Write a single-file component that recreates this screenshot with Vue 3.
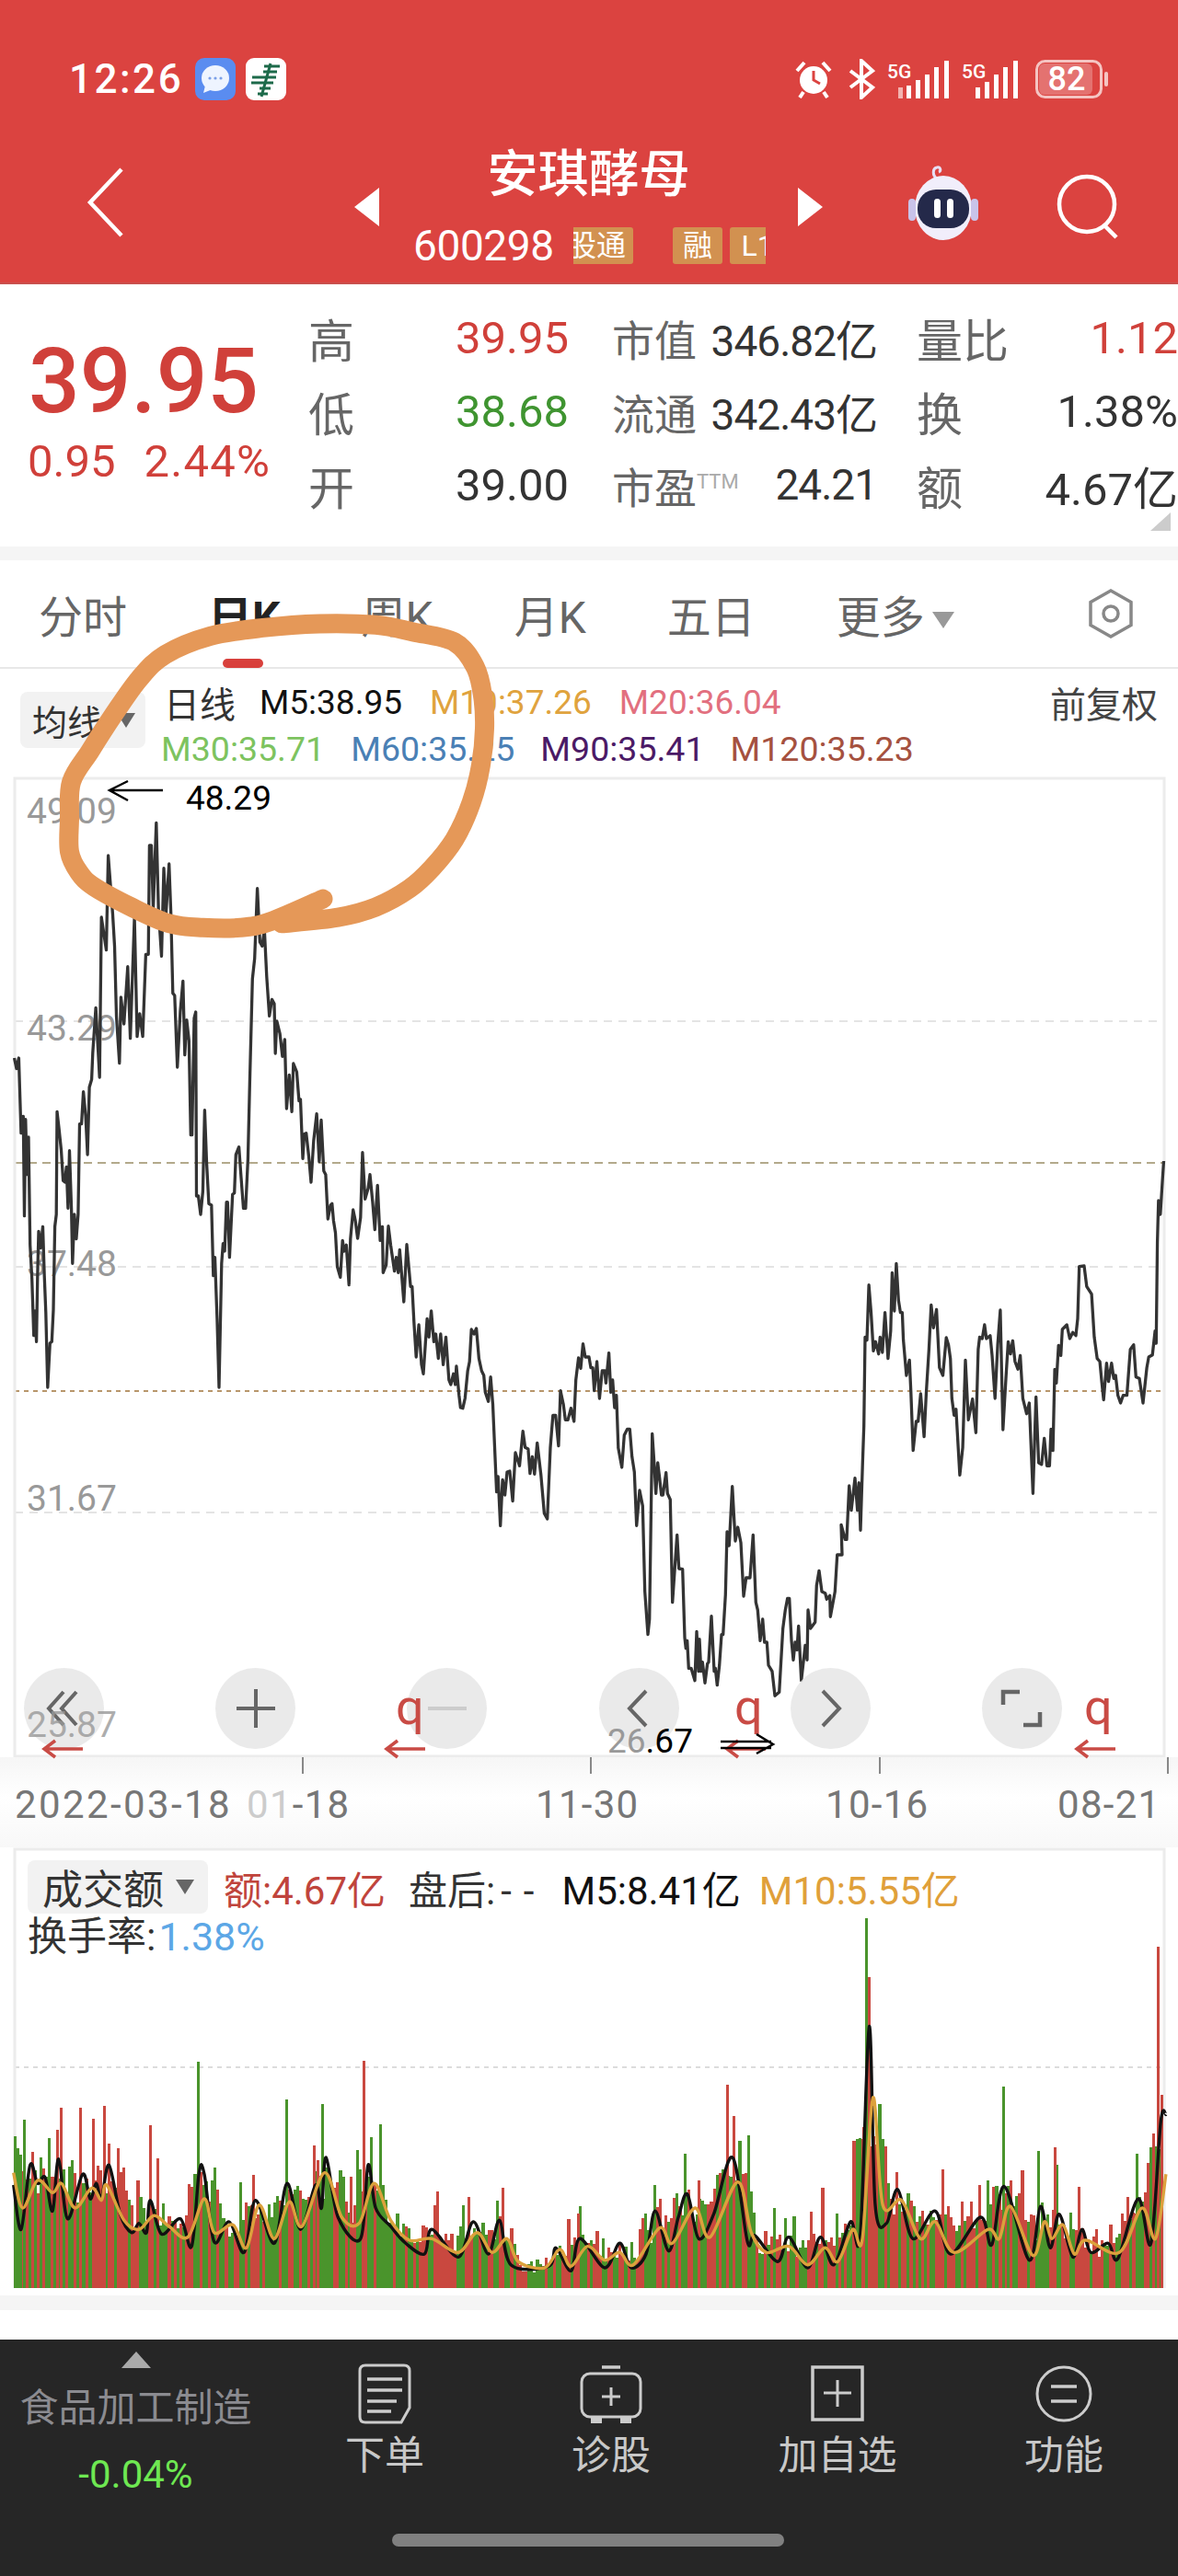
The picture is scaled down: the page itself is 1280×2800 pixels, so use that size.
<script setup>
// price line traced in segments, each one is flat x,y pairs in its own scale
const mapPts = (list, ox, oy, sx, sy) => {
  const out = [];
  for (let i = 0; i < list.length; i += 2) {
    out.push([ox + list[i] / sx, oy + list[i + 1] / sy]);
  }
  return out;
};

const seg1 = [38,150,44,185,50,150,56,395,62,340,65,665,68,350,72,530,76,408,80,760,85,870,90,1055,93,975,97,1075,100,860,103,715,108,770,114,700,118,860,122,980,127,1224,133,1080,138,1075,142,970,146,700,150,660,152,325,157,380,163,450,168,550,173,555,177,505,181,640,185,452,190,640,193,820,198,660,203,740,208,660,212,365,217,365,222,260,228,340,233,465,238,245,244,220,247,133,255,-14,265,213,270,-309,283,-202,288,-510,294,-416,300,-322,305,-215,310,13,318,167,322,-48,330,39,340,-148,347,86,358,-309,365,80,372,6,380,80,388,-188,395,-188,398,-543,403,-543,408,-336,416,-617,422,-336,430,-182,436,-469,442,-322,450,-483,455,-322,460,-61,465,-54,472,180,480,-1,487,-101,492,140,497,26,503,93,508,401,511,401,517,20,521,0,523,600,528,600,534,660,540,585,545,320,550,490,556,625,563,630,568,860,572,800,578,1000,583,1224,590,820,594,755,598,780,603,620,606,620,611,800,619,595,624,590,628,465,636,440,642,540,648,640,654,640,660,480,665,227,672,-108,678,-175,685,-403,692,-228,698,-215,704,-269,710,-115,717,13,724,-41,730,-27,733,135,737,30,745,70,752,145,758,90,763,315,770,205,777,325,781,168,790,195,796,290,800,285,806,478,810,398,815,395,822,470,828,555,835,420,843,332,850,488,855,352,862,518,867,530,873,675,880,630,884,625,888,680,893,720,898,830,906,865,912,745,916,780,922,760,929,890,933,740,940,645,946,680,952,738,960,670,965,458,972,610,980,575,985,530,992,620,998,710,1005,565,1012,745,1018,700,1020,850,1028,825,1034,698,1040,760,1050,845,1055,800,1060,850,1064,775,1075,945,1083,758,1093,895,1097,895,1102,1010,1108,1125,1115,1020,1122,1150,1127,1180,1137,1000,1142,1060,1148,975,1155,1075,1160,1050,1167,1130,1173,1050,1180,1150,1187,1060,1195,1200,1200,1215,1207,1180,1212,1215,1215,1155,1222,1250,1226,1290,1232,1292,1238,1260,1245,1170,1250,1140,1255,1035,1262,1050,1268,1032,1275,1130,1282,1170,1288,1185,1292,1240,1300,1270,1306,1190,1312,1280,1322,1565,1326,1515,1332,1675,1338,1525,1344,1575,1350,1500,1357,1497,1365,1595,1372,1437,1383,1480,1392,1367,1398,1420,1406,1425,1411,1505,1417,1450,1423,1507,1430,1405,1440,1510,1449,1635,1457,1653,1465,1420,1472,1315,1479,1315,1487,1415,1492,1235,1500,1280,1505,1330,1512,1330,1520,1292,1528,1335,1533,1200,1540,1128,1546,1162,1552,1082,1558,1125,1568,1125];
const seg2 = [5,560,10,560,14,635,21,540,28,660,35,570,42,570,45,610,53,512,58,640,63,600,68,690,73,650,78,820];
const seg3 = [95,70,107,135,115,30,125,10,133,10,140,100,148,150,155,325,165,210,175,260,182,540,192,680,197,630,206,25,213,130,218,220,224,120,230,170,236,225,241,225,251,152,256,220,265,240,272,575,287,355,293,465,305,467,312,690,316,725,320,700,325,790,333,790,345,830,351,670,357,800,360,695,365,800,370,770,378,838,386,775,390,770,399,620,408,800,412,790,418,845,425,780,432,680,437,680,445,550,450,345,457,390,467,197,477,375,485,330,495,380,504,555,512,495,525,495,535,355,544,575,550,600,558,700,566,630,572,705,580,705,585,780,597,800,606,880,620,868,632,660,640,600,647,562,653,562,660,700,666,763,672,705,678,730,683,652,692,830,705,715,711,763,714,600,722,660,737,640,742,520,750,472,759,540,770,545,775,565,785,553,787,622,802,540,809,420,825,420,822,322,835,370,840,370,848,195,855,275,867,170,875,275,880,185,885,340,892,120,896,0];
const seg4 = [735,460,740,470,745,290,751,380,757,505,763,475,771,515,775,460,781,510,788,380,796,530,803,440,807,250,813,375,818,220,824,340,829,380,834,380,837,470,845,585,853,535,857,640,863,830,871,735,876,735,883,645,892,785,898,640,905,500,911,355,917,430,925,370,933,560,942,585,951,462,957,485,962,530,966,660,972,715,977,695,987,910,995,820,1002,535,1010,730,1021,662,1030,772,1036,500,1040,460,1047,465,1053,420,1058,465,1068,455,1073,520,1081,660,1088,485,1095,372,1102,762,1110,590,1116,475,1122,515,1128,472,1134,540,1142,565,1148,520,1155,660,1165,710,1172,675,1182,970,1190,655,1197,870,1205,875,1212,790,1219,880,1226,880,1230,760,1235,830,1240,565,1244,610,1250,487,1256,520,1260,435,1272,420,1280,465,1288,445,1296,455,1301,400,1305,230,1318,228,1325,295,1338,320,1345,460,1353,530,1360,540,1365,605,1370,665,1378,545,1383,605,1391,545,1397,595,1402,585,1408,650,1415,675,1422,650,1432,650,1441,500,1450,485,1456,590,1465,595,1475,675,1485,560,1490,525,1500,518,1507,440,1510,480,1513,150,1516,15,1521,60,1527,-60,1530,-114];

const pricePts = [
  ...mapPts(seg1, 0, 1100, 2.45, 3),
  ...mapPts(seg2, 640, 1300, 2.45, 3),
  ...mapPts(seg3, 640, 1550, 3, 3),
  ...mapPts(seg4, 640, 1300, 2.45, 3),
];
const priceLine = pricePts.map((p, i) => (i ? 'L' : 'M') + p[0].toFixed(1) + ' ' + p[1].toFixed(1)).join(' ');

// volume panel
const ma5 = mapPts([18,885,28,1030,40,820,50,880,60,860,70,970,78,800,90,995,110,850,120,930,128,880,135,930,145,820,160,980,175,1040,185,1010,195,1040,200,935,215,1045,240,995,255,1085,265,845,272,850,285,1070,305,1005,325,1105,340,935,365,1075,382,880,400,1030,420,885,428,960,434,795,450,990,480,1060,490,820,500,960,520,1020,540,1075,565,1110,575,1030,610,1120,630,1005,650,1110,665,1000,680,1145,730,1150,740,1090,760,1165,772,1060,805,1155,825,1075,840,1155,860,1110,872,970,890,1100,903,990,915,915,930,1060,950,980,975,795,995,1070,1005,1050,1035,1135,1050,1055,1075,1155,1092,1055,1110,1145,1132,1005,1145,1050,1157,368,1165,950,1180,1010,1195,900,1215,1060,1245,970,1265,1110,1305,990,1320,1080,1337,890,1370,1130,1385,955,1398,1090,1410,980,1428,1120,1440,1030,1452,1105,1475,1075,1488,1125,1515,930,1532,1075,1545,680,1552,655], 0, 2080, 1.225, 3);
const ma10 = mapPts([18,845,30,960,50,870,70,910,82,880,100,960,122,895,135,935,142,885,165,1000,185,1030,205,985,225,1020,250,1055,272,930,285,1040,310,1015,328,1090,345,950,365,1060,385,940,402,1020,432,845,455,990,478,1010,498,880,520,1000,545,1065,575,1060,610,1105,635,1040,655,1105,675,1060,690,1135,725,1155,745,1095,760,1150,782,1085,805,1130,825,1105,843,1145,878,1025,895,1075,925,960,945,1055,982,875,1000,1040,1020,1105,1050,1085,1075,1145,1098,1090,1115,1135,1135,1030,1148,1060,1162,600,1175,950,1200,935,1225,1060,1245,1005,1270,1105,1315,1030,1330,1060,1345,955,1375,1115,1390,1005,1400,1060,1415,1015,1430,1110,1445,1065,1490,1105,1520,960,1538,1060,1552,850], 0, 2080, 1.225, 3);

// catmull-rom through the traced points, so the peaks keep their height
const smooth = (pts) => {
  let d = `M${pts[0][0].toFixed(1)} ${pts[0][1].toFixed(1)}`;
  for (let i = 0; i < pts.length - 1; i++) {
    const p0 = pts[i - 1] || pts[i];
    const p1 = pts[i];
    const p2 = pts[i + 1];
    const p3 = pts[i + 2] || p2;
    const c1x = p1[0] + (p2[0] - p0[0]) / 6;
    const c1y = p1[1] + (p2[1] - p0[1]) / 6;
    const c2x = p2[0] - (p3[0] - p1[0]) / 6;
    const c2y = p2[1] - (p3[1] - p1[1]) / 6;
    d += ` C${c1x.toFixed(1)} ${c1y.toFixed(1)} ${c2x.toFixed(1)} ${c2y.toFixed(1)} ${p2[0].toFixed(1)} ${p2[1].toFixed(1)}`;
  }
  return d;
};
const ma5Line = smooth(ma5);
const ma10Line = smooth(ma10);

const levelAt = (x) => {
  for (let i = 1; i < ma5.length; i++) {
    if (x <= ma5[i][0]) {
      const a = ma5[i - 1];
      const b = ma5[i];
      return a[1] + ((b[1] - a[1]) * (x - a[0])) / (b[0] - a[0] || 1);
    }
  }
  return ma5[ma5.length - 1][1];
};

const RED = '#c9483f';
const GREEN = '#4a942c';
const BOTTOM = 2487;
let seed = 298;
const rnd = () => {
  seed = (seed * 16807) % 2147483647;
  return seed / 2147483647;
};

// the bars fill the dips of the average too, so take the highest level close by
const bars = [];
for (let x = 15; x < 1264; x += 3.1) {
  const near = Math.min(levelAt(x - 12), levelAt(x), levelAt(x + 12));
  const level = Math.max(near, 2325);
  const jump = rnd() > 0.85 ? rnd() * 60 : 0;
  bars.push({ x: x.toFixed(1), y: (level + rnd() * 24 - 8 - jump).toFixed(1), color: rnd() > 0.5 ? RED : GREEN });
}

const spikes = [
  [30,672,GREEN],[262,483,GREEN],[380,606,GREEN],[428,621,GREEN],[492,730,GREEN],[910,783,GREEN],[1152,15,GREEN],[1334,565,GREEN],[1380,775,GREEN],[1512,783,GREEN],[870,885,GREEN],
  [105,632,RED],[123,670,RED],[137,628,RED],[143,750,RED],[75,705,RED],[198,690,RED],[335,852,RED],[416,757,RED],[482,480,RED],[466,858,RED],[622,925,RED],[768,978,RED],[967,558,RED],[1155,207,RED],[1148,695,RED],[1302,885,RED],[1402,763,RED],[1435,892,RED],[1540,108,RED],[1192,843,RED],[928,870,RED],
].map((s) => ({ x: (s[0] / 1.225).toFixed(1), y: (2080 + s[1] / 3).toFixed(1), color: s[2] }));

const yLabels = [
  { text: '49.09', y: 895 },
  { text: '43.29', y: 1131 },
  { text: '37.48', y: 1387 },
  { text: '31.67', y: 1642 },
];

const tabs = ['分时', '日K', '周K', '月K', '五日'];
const rows = [
  { label: '高', val: '39.95', cls: 'up', l2: '市值', v2: '346.82亿', l3: '量比', v3: '1.12', c3: 'up' },
  { label: '低', val: '38.68', cls: 'down', l2: '流通', v2: '342.43亿', l3: '换', v3: '1.38%', c3: '' },
  { label: '开', val: '39.00', cls: '', l2: '市盈', v2: '24.21', ttm: true, l3: '额', v3: '4.67亿', c3: '' },
];

// the hand-drawn ring over the legend, traced from the photo
const ringPts = mapPts([860,755,720,810,640,825,540,825,450,815,350,775,250,725,210,690,185,640,185,560,190,470,240,395,300,310,370,220,440,160,560,115,700,95,850,85,1000,88,1100,105,1210,130,1265,190,1285,260,1290,340,1280,430,1255,520,1210,610,1150,680,1090,730,1000,775,900,800,750,815], 0, 640, 2.45, 2.24);
const ring = smooth(ringPts);
const redQs = [
  { x: 442, arrow: 420 },
  { x: 810, arrow: 790 },
  { x: 1190, arrow: 1170 },
];
</script>

<template>
  <div class="page">
    <header class="head">
      <div class="status">
        <span class="time">12:26</span>
        <svg class="app-icon" width="44" height="46" viewBox="0 0 44 46">
          <rect width="44" height="46" rx="10" fill="#5a8cf0" />
          <ellipse cx="22" cy="22" rx="15" ry="14" fill="#eef4ff" />
          <path d="M11 30 L9 38 L19 34 Z" fill="#eef4ff" />
          <circle cx="16" cy="22" r="1.6" fill="#7a9fe8" />
          <circle cx="22" cy="22" r="1.6" fill="#7a9fe8" />
          <circle cx="28" cy="22" r="1.6" fill="#7a9fe8" />
        </svg>
        <svg class="app-icon" width="44" height="46" viewBox="0 0 44 46">
          <rect width="44" height="46" rx="9" fill="#fff" />
          <path d="M20 9 H37 M19 15 H34 M7 21 H33 M6 27 H30 M15 33 H27 M13 39 H24" fill="none" stroke="#1d6a4a" stroke-width="3.2" />
          <path d="M27 6 L17 42" fill="none" stroke="#1d6a4a" stroke-width="3" />
        </svg>
        <div class="status-right">
          <svg class="alarm" width="40" height="42" viewBox="0 0 40 42">
            <circle cx="20" cy="22" r="15" fill="#fff" />
            <path d="M20 12 V22 L27 26" fill="none" stroke="#db4340" stroke-width="3" />
            <path d="M2 12 L10 3 M38 12 L30 3 M9 35 L5 41 M31 35 L35 41" stroke="#fff" stroke-width="4" fill="none" />
          </svg>
          <svg width="30" height="44" viewBox="0 0 30 44">
            <path d="M3 13 L27 31 L15 42 V2 L27 13 L3 31" fill="none" stroke="#fff" stroke-width="4" />
          </svg>
          <svg width="68" height="42" viewBox="0 0 68 42">
            <text x="0" y="20" class="five-g">5G</text>
            <rect x="12" y="30" width="5" height="12" fill="#f3b3b0" />
            <rect x="21" y="28" width="5" height="14" fill="#fff" />
            <rect x="31" y="22" width="5" height="20" fill="#fff" />
            <rect x="41" y="16" width="5" height="26" fill="#fff" />
            <rect x="51" y="8" width="5" height="34" fill="#fff" />
            <rect x="62" y="1" width="5" height="41" fill="#fff" />
          </svg>
          <svg width="63" height="42" viewBox="0 0 63 42">
            <text x="0" y="20" class="five-g">5G</text>
            <rect x="15" y="30" width="5" height="12" fill="#fff" />
            <rect x="25" y="24" width="5" height="18" fill="#fff" />
            <rect x="35" y="16" width="5" height="26" fill="#fff" />
            <rect x="45" y="8" width="5" height="34" fill="#fff" />
            <rect x="56" y="1" width="5" height="41" fill="#fff" />
          </svg>
          <svg class="battery" width="80" height="42" viewBox="0 0 80 42">
            <rect x="1.5" y="1.5" width="70" height="39" rx="9" fill="none" stroke="#f5c4c2" stroke-width="3" />
            <rect x="4" y="4" width="58" height="34" rx="6" fill="#fff" opacity="0.25" />
            <rect x="75" y="13" width="4" height="16" rx="2" fill="#f5c4c2" />
            <text x="34" y="33" text-anchor="middle" class="batt">82</text>
          </svg>
        </div>
      </div>
      <div class="nav">
        <div class="nav-left">
          <svg width="42" height="76" viewBox="0 0 42 76">
            <path d="M38 2 L4 38 L38 74" fill="none" stroke="#fff" stroke-width="4.5" />
          </svg>
        </div>
        <div class="nav-mid">
          <svg class="tri" width="27" height="42" viewBox="0 0 27 42"><path d="M27 0 V42 L0 21 Z" fill="#fff" /></svg>
          <div class="nav-name">
            <div class="title">安琪酵母</div>
            <div class="sub">
              <span class="code">600298</span>
              <span class="tag tag-clip"><span>沪股通</span></span>
              <span class="tag tag-rz">融</span>
              <span class="tag tag-l1">L1</span>
            </div>
          </div>
          <svg class="tri" width="27" height="42" viewBox="0 0 27 42"><path d="M0 0 V42 L27 21 Z" fill="#fff" /></svg>
        </div>
        <div class="nav-right">
          <svg width="86" height="82" viewBox="0 0 86 82">
            <path d="M36 14 C31 11 31 3 36 2 C40 1 41 6 38 7" fill="none" stroke="#e7dff4" stroke-width="3" />
            <ellipse cx="43" cy="46" rx="31" ry="35" fill="#f1eefb" />
            <rect x="5" y="36" width="8" height="24" rx="4" fill="#c9c3ea" />
            <rect x="73" y="36" width="8" height="24" rx="4" fill="#c9c3ea" />
            <rect x="15" y="26" width="56" height="42" rx="20" fill="#24294a" />
            <rect x="33" y="36" width="7" height="21" rx="3.5" fill="#fff" />
            <rect x="47" y="36" width="7" height="21" rx="3.5" fill="#fff" />
          </svg>
          <svg class="search" width="72" height="72" viewBox="0 0 72 72">
            <circle cx="33" cy="34" r="30" fill="none" stroke="#fff" stroke-width="4.5" />
            <path d="M52 57 L65 70" stroke="#fff" stroke-width="4.5" />
          </svg>
        </div>
      </div>
    </header>

    <section class="quote">
      <div class="price-box">
        <div class="price">39.95</div>
        <div class="change"><span>0.95</span><span>2.44%</span></div>
      </div>
      <div class="quote-grid">
        <template v-for="r in rows" :key="r.label">
          <span class="q-label">{{ r.label }}</span>
          <span class="q-val" :class="r.cls">{{ r.val }}</span>
          <span class="q-label2">{{ r.l2 }}<sup v-if="r.ttm">TTM</sup></span>
          <span class="q-val2">{{ r.v2 }}</span>
          <span class="q-label">{{ r.l3 }}</span>
          <span class="q-val q-end" :class="r.c3">{{ r.v3 }}</span>
        </template>
      </div>
      <span class="corner"></span>
    </section>

    <div class="gap-bar"></div>

    <nav class="tabs">
      <span v-for="t in tabs" :key="t" class="tab" :class="{ active: t === '日K' }">{{ t }}</span>
      <span class="tab">更多<i class="caret"></i></span>
      <svg class="hex" width="56" height="56" viewBox="0 0 56 56">
        <path d="M28 3 L50 15.5 V40.5 L28 53 L6 40.5 V15.5 Z" fill="none" stroke="#888" stroke-width="3.5" />
        <circle cx="28" cy="28" r="8" fill="none" stroke="#888" stroke-width="3.5" />
      </svg>
    </nav>

    <div class="legend-bar">
      <div class="pill pill-ma">均线<i class="caret dark"></i></div>
      <div class="legend">
        <div class="legend-row">
          <span class="l-name">日线</span>
          <span class="c-black">M5:38.95</span>
          <span class="c-orange">M10:37.26</span>
          <span class="c-pink">M20:36.04</span>
          <span class="l-right">前复权</span>
        </div>
        <div class="legend-row second">
          <span class="c-green">M30:35.71</span>
          <span class="c-blue">M60:35.25</span>
          <span class="c-purple">M90:35.41</span>
          <span class="c-brown">M120:35.23</span>
        </div>
      </div>
    </div>

    <div class="chart">
      <svg class="chart-svg" width="1280" height="1066" viewBox="0 844 1280 1066">
        <path d="M16 1110 H1264 M16 1377 H1264 M16 1644 H1264" stroke="#e4e4e4" stroke-width="2" stroke-dasharray="9 7" />
        <path d="M16 1264 H1264" stroke="#b3a98b" stroke-width="2" stroke-dasharray="9 6" />
        <path d="M16 1512 H1264" stroke="#b8966b" stroke-width="2" stroke-dasharray="5 5" />
        <path d="M16 846 H1265 V1909 H16 Z" fill="none" stroke="#ececec" stroke-width="3" />
        <text v-for="l in yLabels" :key="l.text" x="29" :y="l.y" class="y-label">{{ l.text }}</text>
        <path :d="priceLine" fill="none" stroke="#333" stroke-width="3.3" stroke-linejoin="round" />
      </svg>
      <div class="chart-btns">
        <span class="round">
          <svg width="46" height="46" viewBox="0 0 46 46"><path d="M22 5 L6 23 L22 41 M36 5 L20 23 L36 41" fill="none" stroke="#666" stroke-width="4" /></svg>
        </span>
        <span class="round">
          <svg width="46" height="46" viewBox="0 0 46 46"><path d="M23 2 V44 M2 23 H44" fill="none" stroke="#666" stroke-width="4" /></svg>
        </span>
        <span class="round">
          <svg width="46" height="46" viewBox="0 0 46 46"><path d="M2 23 H44" fill="none" stroke="#ccc" stroke-width="4" /></svg>
        </span>
        <span class="round">
          <svg width="46" height="46" viewBox="0 0 46 46"><path d="M31 4 L13 23 L31 42" fill="none" stroke="#666" stroke-width="4" /></svg>
        </span>
        <span class="round">
          <svg width="46" height="46" viewBox="0 0 46 46"><path d="M15 4 L33 23 L15 42" fill="none" stroke="#666" stroke-width="4" /></svg>
        </span>
        <span class="round">
          <svg width="46" height="46" viewBox="0 0 46 46"><path d="M3 19 V5 H21 M43 27 V41 H25" fill="none" stroke="#666" stroke-width="4.5" /></svg>
        </span>
      </div>
      <!-- lies over the round button in the reference -->
      <span class="low-label">25.87</span>
    </div>

    <div class="axis">
      <div class="ticks"><i></i><i></i><i></i><i></i></div>
      <div class="dates">
        <span class="first-date">2022-03-18</span>
        <span><em>01</em>-18</span>
        <span>11-30</span>
        <span>10-16</span>
        <span>08-21</span>
      </div>
    </div>

    <section class="vol">
      <svg class="vol-svg" width="1280" height="479" viewBox="0 2008 1280 479">
        <path d="M16 2247 H1265" stroke="#dcdcdc" stroke-width="2" stroke-dasharray="5 5" />
        <path d="M16 2487 V2010 H1265 V2487" fill="none" stroke="#ececec" stroke-width="3" />
        <g shape-rendering="crispEdges">
          <rect v-for="b in bars" :key="b.x" :x="b.x" :y="b.y" width="3.2" :height="BOTTOM - b.y" :fill="b.color" />
          <rect v-for="s in spikes" :key="s.x" :x="s.x" :y="s.y" width="3" :height="BOTTOM - s.y" :fill="s.color" />
        </g>
        <path :d="ma5Line" fill="none" stroke="#111" stroke-width="3.4" stroke-linejoin="round" />
        <path :d="ma10Line" fill="none" stroke="#dca13c" stroke-width="3.4" stroke-linejoin="round" />
      </svg>
      <div class="vol-head">
        <div class="pill pill-vol">成交额<i class="caret dark"></i></div>
        <span class="vol-red">额:4.67亿</span>
        <span class="vol-dark">盘后:<em>--</em></span>
        <span class="vol-black">M5:8.41亿</span>
        <span class="vol-orange">M10:5.55亿</span>
      </div>
      <div class="turnover">换手率:<span>1.38%</span></div>
    </section>

    <div class="gap-bar low"></div>

    <footer class="foot">
      <div class="foot-main">
        <div class="sector">
          <i class="sector-up"></i>
          <div class="sector-name">食品加工制造</div>
          <div class="sector-pct">-0.04%</div>
        </div>
        <div class="foot-item">
          <svg width="58" height="66" viewBox="0 0 58 66">
            <path d="M8 2 H50 Q56 2 56 8 V48 L47 64 H8 Q2 64 2 58 V8 Q2 2 8 2 Z" fill="none" stroke="#ccc" stroke-width="3" />
            <path d="M10 17 H48 M10 29 H48 M10 41 H42 M10 52 H36" stroke="#ccc" stroke-width="3.5" />
          </svg>
          <span>下单</span>
        </div>
        <div class="foot-item">
          <svg width="68" height="66" viewBox="0 0 68 66">
            <path d="M24 4 H44" stroke="#ccc" stroke-width="3.5" />
            <rect x="2" y="11" width="64" height="47" rx="9" fill="none" stroke="#ccc" stroke-width="3" />
            <path d="M34 26 V46 M24 36 H44" stroke="#ccc" stroke-width="3" />
            <path d="M12 58 H24 V65 H12 Z M44 58 H56 V65 H44 Z" fill="#ccc" />
          </svg>
          <span>诊股</span>
        </div>
        <div class="foot-item">
          <svg width="58" height="66" viewBox="0 0 58 66">
            <rect x="2" y="4" width="54" height="57" fill="none" stroke="#ccc" stroke-width="3.5" />
            <path d="M29 18 V47 M14 32 H44" stroke="#ccc" stroke-width="3" />
          </svg>
          <span>加自选</span>
        </div>
        <div class="foot-item">
          <svg width="62" height="66" viewBox="0 0 62 66">
            <circle cx="31" cy="33" r="29" fill="none" stroke="#ccc" stroke-width="3" />
            <path d="M17 25 H45 M17 41 H45" stroke="#ccc" stroke-width="3.5" />
          </svg>
          <span>功能</span>
        </div>
      </div>
      <div class="home-bar"></div>
    </footer>

    <!-- the photo's scribbles sit over everything else -->
    <svg class="scribble" width="1280" height="2800" viewBox="0 0 1280 2800">
      <path :d="ring" fill="none" stroke="#e59858" stroke-width="21" stroke-linecap="round" stroke-linejoin="round" />
      <path d="M177 859 H119 M139 849 L119 859 L139 870" fill="none" stroke="#000" stroke-width="2.5" />
      <text x="202" y="880" class="note">48.29</text>
      <text x="660" y="1905" class="note"><tspan fill="#999">26</tspan>.67</text>
      <path d="M90 1901 H50 M60 1892 L48 1901 L60 1910" fill="none" stroke="#c94b45" stroke-width="3.5" />
      <g v-for="q in redQs" :key="q.x">
        <text :x="q.x - 12" y="1874" class="red-q">q</text>
        <path :d="`M${q.arrow + 42} 1901 H${q.arrow + 2} M${q.arrow + 12} 1892 L${q.arrow} 1901 L${q.arrow + 12} 1910`" fill="none" stroke="#c94b45" stroke-width="3.5" />
      </g>
      <path d="M783 1893 H838 M783 1900 H838 M822 1885 L840 1896 L822 1906" fill="none" stroke="#000" stroke-width="2.5" />
    </svg>
  </div>
</template>

<style scoped>
.page {
  position: relative;
  width: 1280px;
  height: 2800px;
  overflow: hidden;
  background: #fff;
  font-family: Roboto, "Noto Sans CJK SC", sans-serif;
  color: #333;
}

.head {
  height: 309px;
  background: #db4340;
  color: #fff;
  box-sizing: border-box;
  border-bottom: 2px solid #c9504d;
}

.status {
  display: flex;
  align-items: center;
  height: 160px;
  padding: 12px 75px 0 75px;
  box-sizing: border-box;
}

.time {
  font-size: 44px;
  font-weight: 500;
  letter-spacing: 2.5px;
  margin-right: 13px;
}

.app-icon {
  margin-right: 11px;
}

.status-right {
  margin-left: auto;
  display: flex;
  align-items: center;
  gap: 13px;
}

.alarm {
  margin-right: 4px;
}

.battery {
  margin-left: 4px;
}

.five-g {
  font-size: 21px;
  font-weight: 500;
  fill: #fff;
}

.batt {
  font-size: 36px;
  font-weight: 500;
  fill: #fff;
}

.nav {
  display: grid;
  grid-template-columns: 385px 509px 1fr;
  height: 147px;
}

.nav-left {
  padding: 22px 0 0 94px;
}

.nav-mid {
  display: flex;
  align-items: flex-start;
  justify-content: space-between;
}

.tri {
  flex: none;
  margin-top: 44px;
}

.nav-name {
  flex: 1;
  margin-top: -4px;
}

.title {
  font-size: 55px;
  font-weight: 500;
  line-height: 66px;
  text-align: center;
}

.sub {
  display: flex;
  align-items: center;
  width: 383px;
  height: 42px;
  margin: 24px 0 0 37px;
  overflow: hidden;
}

.code {
  flex: none;
  width: 174px;
  font-size: 46px;
  line-height: 42px;
  letter-spacing: -0.4px;
}

.tag {
  flex: none;
  height: 40px;
  box-sizing: border-box;
  background: #d29150;
  font-size: 32px;
  line-height: 40px;
  color: #fff;
  border-radius: 3px;
  text-align: center;
}

.tag-clip {
  display: flex;
  justify-content: flex-end;
  width: 65px;
  padding-right: 8px;
  overflow: hidden;
  border-radius: 0 3px 3px 0;
}

.tag-clip span {
  flex: none;
}

.tag-rz {
  width: 54px;
  margin-left: 43px;
}

.tag-l1 {
  width: 60px;
  margin-left: 8px;
}

.nav-right {
  display: flex;
  align-items: flex-start;
  padding: 20px 0 0 88px;
}

.search {
  margin: 8px 0 0 80px;
}

.quote {
  position: relative;
  display: flex;
  height: 285px;
  box-sizing: border-box;
  padding-top: 18px;
}

.price-box {
  flex: none;
  width: 335px;
  color: #d0403a;
}

.price {
  padding-left: 31px;
  font-size: 98px;
  font-weight: 500;
  line-height: 106px;
  margin-top: 35px;
}

.change {
  display: flex;
  gap: 31px;
  padding-left: 30px;
  font-size: 49px;
  line-height: 60px;
  margin-top: 4px;
}

.change span:last-child {
  letter-spacing: 1.2px;
}

.quote-grid {
  display: grid;
  grid-template-columns: 160px 170px 103px 228px 160px minmax(0, 1fr);
  grid-auto-rows: 80px;
  width: 945px;
  align-items: center;
}

.q-label,
.q-label2 {
  color: #666;
  font-size: 50px;
}

.q-label2 {
  font-size: 46px;
  white-space: nowrap;
}

.q-label2 sup {
  font-size: 22px;
  color: #aaa;
  vertical-align: 16px;
  line-height: 0;
}

.q-val {
  font-size: 49px;
  white-space: nowrap;
}

.q-val2 {
  font-size: 46px;
  color: #333;
  letter-spacing: -1px;
  white-space: nowrap;
  text-align: right;
  padding-right: 43px;
}

.q-end {
  justify-self: end;
}

.up {
  color: #d0403a;
}

.down {
  color: #3f9430;
}

.corner {
  position: absolute;
  right: 8px;
  bottom: 17px;
  width: 0;
  height: 0;
  border-left: 22px solid transparent;
  border-bottom: 20px solid #ccc;
}

.gap-bar {
  height: 15px;
  background: #f5f5f5;
}

.tabs {
  position: relative;
  display: flex;
  align-items: center;
  gap: 88px;
  height: 118px;
  box-sizing: border-box;
  padding: 0 0 0 42px;
  border-bottom: 2px solid #e8e8e8;
  color: #666;
  font-size: 48px;
}

.tab {
  position: relative;
  white-space: nowrap;
}

.tab.active {
  color: #222;
  font-weight: 700;
}

.tab.active::after {
  content: "";
  position: absolute;
  left: 16px;
  bottom: -24px;
  width: 44px;
  height: 10px;
  border-radius: 5px;
  background: #d8403c;
}

.caret {
  display: inline-block;
  margin-left: 8px;
  vertical-align: 5px;
  border-left: 12px solid transparent;
  border-right: 12px solid transparent;
  border-top: 18px solid #999;
}

.caret.dark {
  border-left-width: 10px;
  border-right-width: 10px;
  border-top: 16px solid #666;
  margin-left: 16px;
}

.hex {
  margin-left: auto;
  margin-right: 45px;
}

.legend-bar {
  display: flex;
  height: 117px;
}

.pill {
  display: flex;
  align-items: center;
  box-sizing: border-box;
  background: #f2f2f2;
  border-radius: 8px;
  color: #333;
}

.pill-ma {
  flex: none;
  width: 136px;
  height: 61px;
  margin: 25px 0 0 22px;
  padding-left: 13px;
  font-size: 38px;
}

.legend {
  flex: 1;
  padding: 11px 22px 0 20px;
}

.legend-row {
  display: flex;
  gap: 30px;
  height: 50px;
  align-items: center;
  font-size: 37px;
  white-space: nowrap;
}

.legend-row.second {
  margin-left: -3px;
  margin-top: 1px;
  gap: 28px;
  font-size: 37.5px;
}

.l-name {
  color: #333;
  font-size: 39px;
  margin-right: -4px;
}

.l-right {
  margin-left: auto;
  color: #444;
  font-size: 39px;
}

.c-black {
  color: #111;
}

.c-orange {
  color: #e0a33e;
}

.c-pink {
  color: #e2707f;
}

.c-green {
  color: #7dc35f;
}

.c-blue {
  color: #4a80b5;
}

.c-purple {
  color: #4b1a66;
}

.c-brown {
  color: #a5513f;
}

.chart {
  position: relative;
  height: 1066px;
}

.chart-svg {
  display: block;
}

.y-label {
  font-size: 39px;
  fill: #999;
}

.low-label {
  position: absolute;
  left: 29px;
  bottom: 12px;
  font-size: 39px;
  line-height: 46px;
  color: #999;
  opacity: 0.8;
}

.chart-btns {
  position: absolute;
  left: 26px;
  right: 126px;
  bottom: 9px;
  display: flex;
  justify-content: space-between;
}

.round {
  display: flex;
  align-items: center;
  justify-content: center;
  width: 87px;
  height: 88px;
  border-radius: 50%;
  background: rgba(230, 230, 230, 0.85);
}

.axis {
  height: 98px;
  box-sizing: border-box;
  padding-left: 16px;
  background: linear-gradient(180deg, #f6f6f6, #fff 45%, #f8f8f8);
  overflow: hidden;
}

.ticks {
  display: flex;
  height: 18px;
}

.ticks i {
  flex: none;
  width: 313.5px;
  box-sizing: border-box;
  border-right: 2px solid #888;
}

.dates {
  display: grid;
  grid-template-columns: 252px 314px 315px 252px 1fr;
  margin-top: 10px;
  font-size: 42px;
  line-height: 48px;
  letter-spacing: 1.3px;
  color: #777;
}

.first-date {
  letter-spacing: 2.4px;
  white-space: nowrap;
}

.dates em {
  font-style: normal;
  color: #ccc;
}

.vol {
  position: relative;
  height: 487px;
}

.vol-svg {
  position: absolute;
  left: 0;
  top: 0;
}

.vol-head {
  position: relative;
  display: flex;
  align-items: center;
  height: 58px;
  padding: 14px 0 0 30px;
  font-size: 42px;
  white-space: nowrap;
}

.pill-vol {
  flex: none;
  width: 196px;
  height: 58px;
  margin-right: 17px;
  padding-left: 16px;
  font-size: 44px;
}

.pill-vol .caret {
  margin-left: 13px;
}

.vol-red {
  color: #c0443c;
}

.vol-dark {
  margin-left: 25px;
  color: #333;
}

.vol-dark em {
  font-style: normal;
  letter-spacing: 13px;
  margin-left: 6px;
}

.vol-black {
  margin-left: 17px;
  color: #111;
}

.vol-orange {
  margin-left: 20px;
  color: #e0a03a;
}

.turnover {
  position: relative;
  padding-left: 30px;
  font-size: 43px;
  line-height: 50px;
  color: #333;
}

.turnover span {
  color: #5ca7e6;
  margin-left: 3px;
}

.gap-bar.low {
  height: 16px;
}

.foot {
  margin-top: 32px;
  height: 257px;
  background: #262626;
  color: #c8c8c8;
}

.foot-main {
  display: flex;
  height: 211px;
}

.sector {
  flex: none;
  width: 295px;
  text-align: center;
}

.sector-up {
  display: block;
  width: 0;
  margin: 13px auto 0;
  border-left: 16px solid transparent;
  border-right: 16px solid transparent;
  border-bottom: 18px solid #aaa;
}

.sector-name {
  margin-top: 16px;
  font-size: 42px;
  line-height: 56px;
  color: #8b8b90;
}

.sector-pct {
  margin-top: 16px;
  font-size: 42px;
  line-height: 56px;
  color: #6ee852;
}

.foot-item {
  flex: none;
  width: 246px;
  display: flex;
  flex-direction: column;
  align-items: center;
  padding-top: 26px;
  font-size: 43px;
  line-height: 60px;
}

.foot-item span {
  margin-top: 4px;
}

.home-bar {
  width: 426px;
  height: 14px;
  margin-left: 426px;
  border-radius: 7px;
  background: #808080;
}

.scribble {
  position: absolute;
  left: 0;
  top: 0;
  pointer-events: none;
}

.note {
  font-size: 37px;
  fill: #000;
}

.red-q {
  font-size: 54px;
  fill: #c94b45;
}
</style>
